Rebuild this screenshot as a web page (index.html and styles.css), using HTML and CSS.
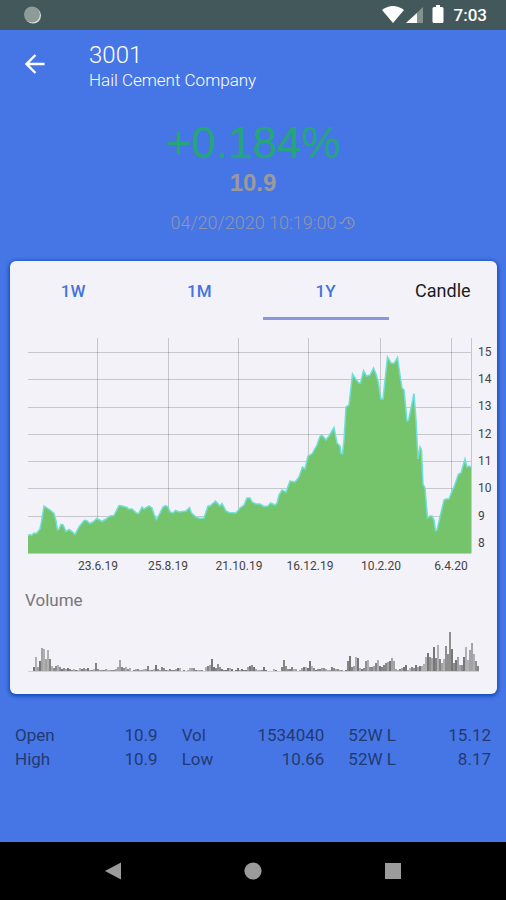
FILE: index.html
```html
<!DOCTYPE html>
<html lang="en">
<head>
    <meta charset="UTF-8">
    <meta name="viewport" content="width=device-width, initial-scale=1.0">
    <title>Hail Cement Company</title>
    <link rel="stylesheet" href="styles.css">
</head>
<body>
    <div class="status-bar">
        <svg class="status-spinner" viewBox="0 0 18 18">
            <circle cx="10" cy="9.500" r="8" fill="#dfe5e2"/>
            <circle cx="9" cy="8.500" r="8" fill="#8d9c98"/>
        </svg>
        <svg class="status-icons" viewBox="0 0 64 20">
            <path d="M0 5 Q11 -3 22 5 L11 18 Z" fill="#fff"/>
            <path d="M41 2 V18 H24 Z" fill="#84928f"/>
            <path d="M35 8 V18 H24 Z" fill="#fff"/>
            <path d="M54 0 h4 v2 h2 q1.500 0 1.500 1.500 v13 q0 1.500 -1.500 1.500 h-8 q-1.500 0 -1.500 -1.500 v-13 q0 -1.500 1.500 -1.500 h2 z" fill="#fff"/>
        </svg>
        <span class="status-time">7:03</span>
    </div>

    <main class="screen">
        <header class="app-bar">
            <button class="back" aria-label="Back">
                <svg viewBox="0 0 20 20"><path d="M10.500 1 L1.500 10 L10.500 19 M1.500 10 H19.500" fill="none" stroke="#fff" stroke-width="2.400"/></svg>
            </button>
            <div>
                <h1>3001</h1>
                <p>Hail Cement Company</p>
            </div>
        </header>

        <section class="quote">
            <p class="change">+0.184%</p>
            <p class="price">10.9</p>
            <p class="date">
                04/20/2020 10:19:00
                <svg viewBox="0 0 16 14"><path d="M4 7 a5.500 5.500 0 1 1 1.600 3.900 M0.500 7 H4 M9.500 3.500 V7.200 L12 8.500" fill="none" stroke="#9095ae" stroke-width="1.300"/></svg>
            </p>
        </section>

        <section class="card">
            <nav class="tabs">
                <button>1W</button>
                <button>1M</button>
                <button class="active">1Y</button>
                <button class="candle">Candle</button>
            </nav>

            <svg class="chart" viewBox="10 330 487 250">
                <path class="grid" d="M28 352.500 H471 M28 379.500 H471 M28 407.500 H471 M28 434.500 H471 M28 461.500 H471 M28 488.500 H471 M28 516.500 H471"/>
                <path class="grid" d="M97.500 338 V553 M168.500 338 V553 M238.500 338 V553 M308.500 338 V553 M380.500 338 V553 M451.500 338 V553 M471.500 338 V553"/>
                <path class="area" id="area"/>
                <path class="line" id="line"/>
                <path class="grid" d="M28 553.500 H471"/>
                <g class="y-labels">
                    <text x="478" y="356">15</text>
                    <text x="478" y="383">14</text>
                    <text x="478" y="410">13</text>
                    <text x="478" y="438">12</text>
                    <text x="478" y="465">11</text>
                    <text x="478" y="492">10</text>
                    <text x="478" y="520">9</text>
                    <text x="478" y="547">8</text>
                </g>
                <g class="x-labels">
                    <text x="98" y="570">23.6.19</text>
                    <text x="168" y="570">25.8.19</text>
                    <text x="239" y="570">21.10.19</text>
                    <text x="310" y="570">16.12.19</text>
                    <text x="381" y="570">10.2.20</text>
                    <text x="451" y="570">6.4.20</text>
                </g>
            </svg>

            <h2>Volume</h2>
            <svg class="volume" id="volume" viewBox="10 0 487 44">
                <path d="M28 42.500 H479" stroke="#d2d1d6"/>
            </svg>
        </section>

        <section class="stats">
            <dl>
                <dt>Open</dt><dd>10.9</dd>
                <dt>High</dt><dd>10.9</dd>
            </dl>
            <dl>
                <dt>Vol</dt><dd>1534040</dd>
                <dt>Low</dt><dd>10.66</dd>
            </dl>
            <dl>
                <dt>52W L</dt><dd>15.12</dd>
                <dt>52W L</dt><dd>8.17</dd>
            </dl>
        </section>
    </main>

    <nav class="nav-bar">
        <button aria-label="Back"><svg viewBox="0 0 18 18"><path d="M1 9 L17 0.500 V17.500 Z"/></svg></button>
        <button aria-label="Home"><svg viewBox="0 0 18 18"><circle cx="9" cy="9" r="8.600"/></svg></button>
        <button aria-label="Recent apps"><svg viewBox="0 0 18 18"><rect x="1" y="1" width="16" height="16"/></svg></button>
    </nav>

    <script>
        const prices = "28,535.5 30,534.5 31.5,535.5 34,533 36.5,533.5 40,529 41.5,522 44,506 47,508 50,510 54,513.5 56,521 57.5,530 59,529 61,524.5 63,525 66,531.5 69,529.5 71.5,531 75,534.5 79,527 84,520.5 86.5,520.5 90,523.5 93,522 97,518.5 102,521.5 106,519 110,516 114,515.5 119,505.5 122,506 127,507.5 128.5,509 132,509 137,513.5 139,513 142,507 144,509 149,506 152,508 154,514 156.5,519.5 160,513 163,507 165.5,505.5 168,507 170,512 173,513 175.5,510.5 179,512 186,511 189.5,507.5 191.5,513 196,517 200,518.5 204,518 208,506 210,506 215.5,501 220,506 222,503.5 226,511 229,512.5 236,513 240,508 244,505 247,498 250,498 252,502 256,504 260,504 264,506.5 268,506 270.5,503 275,505 277,503 279,495 282,490 286,492 290,481 295,482 299,477 302.5,467 305,469 308,456 312,454 317,445 320,436.5 322,435 326,440 329,436 334,427.5 337,443 340,446 341,453 342.5,454 344,440 346,407 349,405 352.5,374 355,378 359,383 360.5,383 363.5,370.5 366.5,376 370,375 373.5,368 376,374 378,381 381,399 383,399 387.5,357 391,363 394,363.5 397.5,357.5 400,375 402,388 404,390 407,421 408.5,420.5 411,408 414,393.5 416,420 418,459 420,447 421.5,450 423,484 425,488 427.5,518 430,516 432,516 434,520 435.5,530.5 437,530 440,517 444,500 446,499 449,499 452,491 454,487 458.5,474 461,473 465,459 467,467 469,466 471,467";
        document.getElementById("line").setAttribute("d", "M" + prices);
        document.getElementById("area").setAttribute("d", "M" + prices + " 471,553 28,553 Z");

        // Traded volume, one bar per value
        const volumes = [
            4, 14, 4, 10, 23, 22, 12, 21, 12, 5, 3, 5, 6, 4, 2, 3, 2, 3, 2, 1, 2, 1, 1, 3, 2, 3, 2, 3, 1, 1, 2, 8, 2, 1, 1, 1,
            2, 1, 1, 1, 1, 2, 4, 11, 4, 3, 4, 2, 3, 0, 1, 2, 2, 1, 1, 2, 2, 5, 1, 1, 2, 6, 2, 1, 4, 3, 1, 1, 2, 1, 1, 2, 3, 3,
            0, 1, 0, 1, 3, 3, 3, 1, 1, 1, 1, 0, 4, 5, 6, 12, 4, 3, 7, 4, 2, 1, 1, 3, 3, 2, 0, 1, 3, 1, 2, 1, 1, 4, 5, 6, 4, 2,
            1, 1, 1, 4, 1, 0, 0, 0, 2, 1, 0, 0, 4, 11, 5, 2, 2, 4, 2, 2, 0, 1, 3, 4, 4, 3, 10, 5, 3, 1, 2, 2, 3, 3, 2, 1, 1, 4,
            3, 2, 2, 1, 1, 0, 1, 10, 15, 4, 5, 14, 13, 3, 2, 3, 10, 11, 4, 4, 5, 8, 11, 5, 4, 6, 8, 9, 10, 13, 10, 2, 1, 2, 3,
            4, 6, 1, 3, 4, 3, 6, 4, 5, 5, 7, 14, 18, 14, 13, 24, 13, 26, 12, 8, 12, 25, 17, 39, 22, 8, 11, 14, 6, 6, 14, 24,
            11, 21, 28, 17, 10, 5
        ];
        const shades = ["#a3a3a5", "#858585", "#b0b0b2", "#8f8f91", "#777777"];
        const volume = document.getElementById("volume");
        volumes.forEach((value, i) => {
            const bar = document.createElementNS("http://www.w3.org/2000/svg", "rect");
            bar.setAttribute("x", 33 + i * 2);
            bar.setAttribute("y", 42 - value);
            bar.setAttribute("width", 2);
            bar.setAttribute("height", value);
            bar.setAttribute("fill", shades[(i * 3 + value) % shades.length]);
            volume.appendChild(bar);
        });
    </script>
</body>
</html>
```

FILE: styles.css
```css
* {
    box-sizing: border-box;
    margin: 0;
    padding: 0;
}
body {
    display: flex;
    flex-direction: column;
    min-height: 100vh;
    font-family: Roboto, sans-serif;
    background-color: #4676e6;
}
button {
    border: none;
    background: none;
    font-family: inherit;
    cursor: pointer;
}
svg {
    display: block;
}
.status-bar {
    display: flex;
    align-items: center;
    height: 30px;
    padding: 0 19px 0 23px;
    background-color: #43585a;
    color: white;
}
.status-spinner {
    width: 18px;
    height: 18px;
}
.status-icons {
    width: 64px;
    height: 20px;
    margin-left: auto;
}
.status-time {
    margin-left: 8px;
    font-size: 17px;
    font-weight: 500;
    line-height: 30px;
}
.screen {
    flex: 1;
}
.app-bar {
    display: flex;
    align-items: center;
    gap: 44px;
    padding: 11px 25px 0;
    color: white;
}
.back {
    margin-bottom: 4px;
}
.back svg {
    width: 20px;
    height: 20px;
}
.app-bar h1 {
    font-size: 24px;
    font-weight: 300;
    line-height: 28px;
}
.app-bar p {
    font-size: 17px;
    font-weight: 300;
    line-height: 22px;
}
.quote {
    padding-top: 28px;
    text-align: center;
}
.change {
    font-family: "Liberation Sans", Arial, sans-serif;
    font-size: 44px;
    line-height: 48px;
    color: #24a678;
}
.price {
    font-family: "Liberation Sans", Arial, sans-serif;
    font-size: 24px;
    font-weight: bold;
    line-height: 32px;
    color: #9a9a9c;
}
.date {
    display: flex;
    align-items: center;
    justify-content: center;
    gap: 2px;
    padding: 12px 0 0 19px;
    font-size: 18px;
    font-weight: 300;
    line-height: 24px;
    color: #9095ae;
}
.date svg {
    width: 16px;
    height: 14px;
}
.card {
    margin: 26px 9px 0 10px;
    padding-bottom: 21px;
    border-radius: 6px;
    background-color: #f3f2f8;
    box-shadow: 0 1px 4px 1px #0c47b0;
}
.tabs {
    display: grid;
    grid-template-columns: 7fr 7fr 7fr 6fr;
    height: 59px;
}
.tabs button {
    padding-top: 3px;
    border-bottom: 3px solid transparent;
    font-size: 17px;
    font-weight: 500;
    color: #4573dc;
}
.tabs .active {
    border-bottom-color: #8798de;
}
.tabs .candle {
    font-size: 18px;
    font-weight: 400;
    color: #1c1c1e;
}
.chart {
    width: 100%;
    margin-top: 10px;
}
.grid {
    fill: none;
    stroke: #000;
    stroke-opacity: 0.18;
}
.area {
    fill: #75c46b;
}
.line {
    fill: none;
    stroke: #6fe0d8;
    stroke-width: 1.5;
}
.chart text {
    font-size: 12px;
    fill: #444;
}
.x-labels {
    text-anchor: middle;
}
.card h2 {
    padding: 8px 15px;
    font-size: 17px;
    font-weight: 400;
    line-height: 24px;
    color: #77767b;
}
.volume {
    width: 100%;
    margin-top: 9px;
}
.stats {
    display: grid;
    grid-template-columns: repeat(3, 1fr);
    gap: 24px;
    padding: 29px 15px;
    font-size: 17px;
    line-height: 24px;
    color: #223a72;
}
.stats dl {
    display: grid;
    grid-template-columns: auto auto;
}
.stats dd {
    text-align: right;
}
.nav-bar {
    display: flex;
    justify-content: center;
    gap: 122px;
    padding: 20px;
    background-color: black;
}
.nav-bar svg {
    width: 18px;
    height: 18px;
    fill: #9b9b9b;
}
```
